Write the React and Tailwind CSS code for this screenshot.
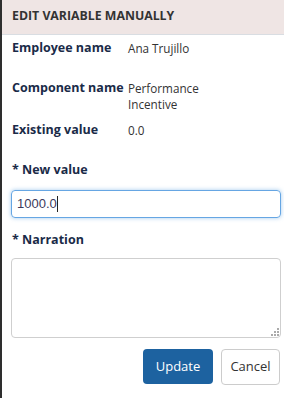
export default function App() {
  const rows = [
    { label: "Employee name", value: ["Ana Trujillo"], h: "h-[40px]" },
    { label: "Component name", value: ["Performance", "Incentive"], h: "h-[42px]" },
    { label: "Existing value", value: ["0.0"], h: "h-[16px]" },
  ];

  return (
    <div className="flex w-[284px] h-[398px] bg-white overflow-hidden" style={{ fontFamily: '"Open Sans", sans-serif' }}>
      {/* backdrop edge */}
      <div className="w-[2px] shrink-0 bg-[#2e2e2e]" />

      <div className="flex-1 flex flex-col">
        <div className="h-[35px] shrink-0 flex items-center pl-[10px] pb-[2px] bg-[#efe5e4] border-b border-[#d9dde2]">
          <span className="text-[12.3px] font-bold text-[#333]">EDIT VARIABLE MANUALLY</span>
        </div>

        <div className="pl-[9px] pr-[3px] pt-[5px] flex flex-col">
          {rows.map((r) => (
            <div key={r.label} className={`grid grid-cols-[116px_1fr] pl-[1px] leading-4 ${r.h}`}>
              <span className="text-[12.5px] font-bold text-[#1a2b48]">{r.label}</span>
              <span className="text-[11.7px] text-[#333]">
                {r.value.map((v) => (
                  <span key={v} className="block">{v}</span>
                ))}
              </span>
            </div>
          ))}

          <div className="mt-6 pl-[1px] text-[12.5px] leading-4 font-bold text-[#1a2b48]">* New value</div>
          <div className="mt-3 h-[28px] flex items-center px-[5px] rounded-[4px] border border-[#66a6e3] shadow-[0_0_4px_rgba(102,166,227,0.6)]">
            <span className="text-[13px] text-[#3b3a5c]" style={{ fontFamily: '"Liberation Sans", Arial, sans-serif' }}>1000.0</span>
            <span className="w-px h-[16px] bg-[#222]" />
          </div>

          <div className="mt-[14px] pl-[1px] text-[12.5px] leading-4 font-bold text-[#1a2b48]">* Narration</div>
          <div className="relative mt-[10px]">
            <textarea className="block w-full h-[80px] resize-none rounded-[4px] border border-[#cfcfcf] outline-none px-[5px] text-[13px]" />
            {/* resize grip */}
            <div className="absolute right-[2px] bottom-[2px] grid grid-cols-3 gap-px">
              <span />
              <span />
              <span className="w-[2px] h-[2px] bg-[#aaa]" />
              <span />
              <span className="w-[2px] h-[2px] bg-[#aaa]" />
              <span className="w-[2px] h-[2px] bg-[#aaa]" />
              <span className="w-[2px] h-[2px] bg-[#aaa]" />
              <span className="w-[2px] h-[2px] bg-[#aaa]" />
              <span className="w-[2px] h-[2px] bg-[#aaa]" />
            </div>
          </div>

          <div className="mt-[11px] flex justify-end gap-2 pr-[1px]">
            <button className="w-[70px] h-[35px] rounded-[4px] bg-[#1d62a0] text-white text-[13px]">Update</button>
            <button className="w-[59px] h-[36px] rounded-[4px] bg-white border border-[#cccccc] text-[#333] text-[13px]">Cancel</button>
          </div>
        </div>
      </div>
    </div>
  );
}
